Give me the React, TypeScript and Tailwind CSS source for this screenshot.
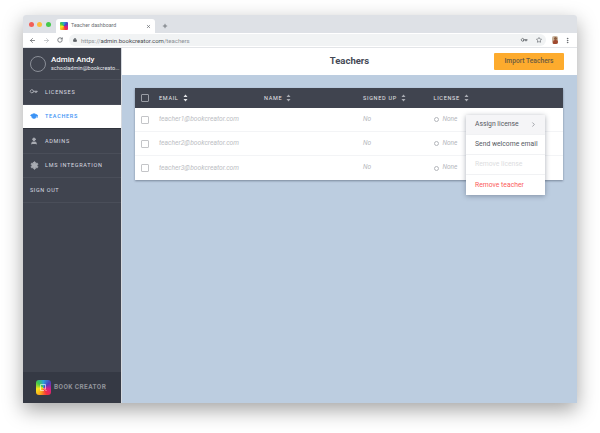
import { ArrowLeft, ArrowRight, ChevronRight, EllipsisVertical, GraduationCap, Key, Lock, Plus, RotateCw, Settings, Star, User, X } from "lucide-react";

const teachers = ["teacher1@bookcreator.com", "teacher2@bookcreator.com", "teacher3@bookcreator.com"];

export default function App() {
  return (
    <div className="h-[433px] w-[600px] overflow-hidden bg-white pl-[23px] pt-[15px] font-['Roboto',sans-serif]">
      <div className="flex h-[388px] w-[554px] flex-col overflow-hidden rounded-t-[3px] shadow-[0_7px_20px_rgba(0,0,0,0.36)]">
        <TabBar />
        <AddressBar />
        <div className="flex min-h-0 flex-1">
          <Sidebar />
          <main className="flex min-w-0 flex-1 flex-col bg-[#bccde0]">
            <header className="relative flex h-[27px] shrink-0 items-center justify-center bg-white">
              <h1 className="text-[9.5px] font-bold text-[#454a56]">Teachers</h1>
              <button className="absolute right-[13px] top-[5px] h-[17px] w-[70px] rounded-[1px] bg-[#fdab2d] text-[6.7px] font-medium text-[#6a5a42]">
                Import Teachers
              </button>
            </header>
            <div className="relative ml-[13px] mr-[14px] mt-[13px]">
              <TeacherTable />
              <RowMenu />
            </div>
          </main>
        </div>
      </div>
    </div>
  );
}

function TabBar() {
  return (
    <div className="flex h-[18px] shrink-0 items-end bg-[#dee1e6]">
      <div className="ml-[5.5px] mr-[5.5px] flex h-[18px] items-center gap-[3.5px] self-center">
        <span className="h-[5px] w-[5px] rounded-full bg-[#f25f58]" />
        <span className="h-[5px] w-[5px] rounded-full bg-[#fbbe3f]" />
        <span className="h-[5px] w-[5px] rounded-full bg-[#45c94b]" />
      </div>
      <div className="flex h-[14px] w-[99px] items-center rounded-t-[3px] bg-white pl-[4px] pr-[4px]">
        <Logo className="h-[8px] w-[8px] rounded-[1px]" />
        <span className="ml-[3px] flex-1 text-[5.3px] text-[#6b6f74]">Teacher dashboard</span>
        <X className="h-[5px] w-[5px] text-[#5f6368]" strokeWidth={3} />
      </div>
      <Plus className="mb-[4px] ml-[7px] h-[6px] w-[6px] text-[#5f6368]" strokeWidth={3} />
    </div>
  );
}

function AddressBar() {
  return (
    <div className="flex h-[15px] shrink-0 items-center border-b border-[#e3e5e8] bg-white pl-[6px] pr-[6px]">
      <ArrowLeft className="h-[7px] w-[7px] text-[#5f6368]" strokeWidth={2.5} />
      <ArrowRight className="ml-[7px] h-[7px] w-[7px] text-[#b4b7bb]" strokeWidth={2.5} />
      <RotateCw className="ml-[7px] h-[6px] w-[6px] text-[#5f6368]" strokeWidth={3} />
      <div className="ml-[6px] flex h-[12px] w-[477px] items-center rounded-full bg-[#f1f3f4] pl-[4px] pr-[4px]">
        <Lock className="h-[4px] w-[4px] fill-[#5f6368] text-[#5f6368]" strokeWidth={3} />
        <span className="ml-[4px] flex-1 text-[6px] text-[#8b8f94]">
          https://<span className="text-[#4a4e52]">admin.bookcreator.com</span>/teachers
        </span>
        <Key className="mr-[9px] h-[6px] w-[6px] rotate-45 text-[#5f6368]" strokeWidth={3} />
        <Star className="h-[6px] w-[6px] text-[#5f6368]" strokeWidth={2.5} />
      </div>
      <span className="ml-[6px] flex h-[8px] w-[6px] flex-col items-center overflow-hidden rounded-[2px] bg-[#c9b39c]">
        <span className="mt-[1px] h-[3px] w-[3px] rounded-full bg-[#8a5a3c]" />
        <span className="h-[4px] w-[5px] rounded-t-[2px] bg-[#a0492f]" />
      </span>
      <EllipsisVertical className="ml-[6px] h-[7px] w-[7px] text-[#5f6368]" strokeWidth={3} />
    </div>
  );
}

function Sidebar() {
  return (
    <aside className="flex w-[99px] shrink-0 flex-col border-r border-[#d5d9df] bg-[#40444f]">
      <div className="flex h-[32px] shrink-0 items-center border-b border-[#4a4e59] pl-[7px]">
        <span className="h-[16px] w-[16px] shrink-0 rounded-full border border-[#8a8e97]" />
        <div className="ml-[5px] min-w-0">
          <p className="text-[8px] font-medium leading-[10px] text-white">Admin Andy</p>
          <p className="whitespace-nowrap text-[5.5px] leading-[7px] text-[#e4e6ea]">schooladmin@bookcreato...</p>
        </div>
      </div>
      <NavItem label="LICENSES" icon={<Key className="h-[7px] w-[7px] rotate-45 text-[#a9acb3]" strokeWidth={3} />} />
      <NavItem active label="TEACHERS" icon={<GraduationCap className="h-[8px] w-[8px] fill-[#3b93f5] text-[#3b93f5]" strokeWidth={2.5} />} />
      <NavItem label="ADMINS" icon={<User className="h-[8px] w-[8px] fill-[#a9acb3] text-[#a9acb3]" strokeWidth={2.5} />} />
      <NavItem label="LMS INTEGRATION" icon={<Settings className="h-[9px] w-[9px] fill-[#a9acb3] text-[#a9acb3]" strokeWidth={2.5} />} />
      <div className="flex h-[24.5px] shrink-0 items-center border-b border-[#4a4e59] pl-[7px] text-[5.5px] tracking-[0.6px] text-[#d9dbe0]">
        SIGN OUT
      </div>
      <div className="mt-auto flex h-[31px] shrink-0 items-center bg-[#353944] pl-[13px]">
        <Logo className="h-[15px] w-[15px] rounded-[3px]" book />
        <span className="ml-[3px] text-[6.5px] font-bold tracking-[0.4px] text-[#8f9299]">BOOK CREATOR</span>
      </div>
    </aside>
  );
}

function NavItem({ label, icon, active }: { label: string; icon: React.ReactNode; active?: boolean }) {
  return (
    <div className={`flex h-[24.5px] shrink-0 items-center border-b pl-[7px] ${active ? "border-[#2f333c] bg-white" : "border-[#4a4e59]"}`}>
      <span className="flex w-[15px] justify-start">{icon}</span>
      <span className={`text-[5.5px] tracking-[0.7px] ${active ? "font-medium text-[#3b93f5]" : "text-[#d9dbe0]"}`}>{label}</span>
    </div>
  );
}

function TeacherTable() {
  return (
    <div className="bg-white shadow-[0_1px_2px_rgba(40,50,70,0.45)]">
      <div className="flex h-[20px] items-center bg-[#40444f] text-[5.5px] tracking-[0.7px] text-[#e6e7ea]">
        <span className="ml-[5.5px] h-[8px] w-[8px] rounded-[1px] border border-[#9a9da5]" />
        <Head className="ml-[10.5px] w-[105px]" label="EMAIL" bright />
        <Head className="w-[99px]" label="NAME" />
        <Head className="w-[70.5px]" label="SIGNED UP" />
        <Head label="LICENSE" />
      </div>
      {teachers.map((email, i) => (
        <div key={email} className={`flex h-[24px] items-center ${i < 2 ? "border-b border-[#f3f4f6]" : ""}`}>
          <span className="ml-[5.5px] h-[8px] w-[8px] rounded-[1px] border border-[#c4c5c8]" />
          <span className="ml-[10.5px] w-[204px] text-[6.7px] italic text-[#bcbec3]">{email}</span>
          <span className="w-[70.5px] text-[6.5px] italic text-[#b4b6bb]">No</span>
          <span className="h-[5px] w-[5px] rounded-full border border-[#b4b6bb]" />
          <span className="ml-[4px] text-[6.5px] italic text-[#b4b6bb]">None</span>
        </div>
      ))}
    </div>
  );
}

function Head({ label, className, bright }: { label: string; className?: string; bright?: boolean }) {
  const tone = bright ? "#e6e7ea" : "#a9acb3";
  return (
    <span className={`flex items-center gap-[4px] ${className ?? ""}`}>
      {label}
      <svg width="5" height="8" viewBox="0 0 5 8" fill={tone}>
        <path d="M2.5 0.5 L4.5 3 H0.5 Z M2.5 7.5 L0.5 5 H4.5 Z" />
      </svg>
    </span>
  );
}

function RowMenu() {
  return (
    <div className="absolute left-[331px] top-[27px] w-[79px] bg-white text-[6.8px] shadow-[0_1px_5px_rgba(40,50,70,0.4)]">
      <div className="flex h-[20px] items-center justify-between border-b border-[#f1f2f4] bg-[#f5f5f7] pl-[9px] pr-[8px] text-[#55595f]">
        Assign license
        <ChevronRight className="h-[7px] w-[7px] text-[#6b6f78]" strokeWidth={2} />
      </div>
      <div className="flex h-[20px] items-center border-b border-[#f1f2f4] pl-[9px] text-[#55595f]">Send welcome email</div>
      <div className="flex h-[20px] items-center border-b border-[#f1f2f4] pl-[9px] text-[#dcdde0]">Remove license</div>
      <div className="flex h-[20px] items-center pl-[9px] text-[#fb5a5a]">Remove teacher</div>
    </div>
  );
}

function Logo({ className, book }: { className: string; book?: boolean }) {
  return (
    <span className={`flex shrink-0 items-center justify-center bg-[conic-gradient(from_0deg,#2a9fd8,#4b3fc0,#d0208a,#f5303f,#f9a31b,#f8e71c,#3fc94b,#2a9fd8)] ${className}`}>
      {book && (
        <svg width="9" height="9" viewBox="0 0 9 9" fill="none" stroke="#ffffff" strokeWidth="0.6">
          <path d="M1.5 1.5 H6.5 V6 M1.5 1.5 V7.5 H5 M4.5 5 L7.5 8" />
        </svg>
      )}
    </span>
  );
}
